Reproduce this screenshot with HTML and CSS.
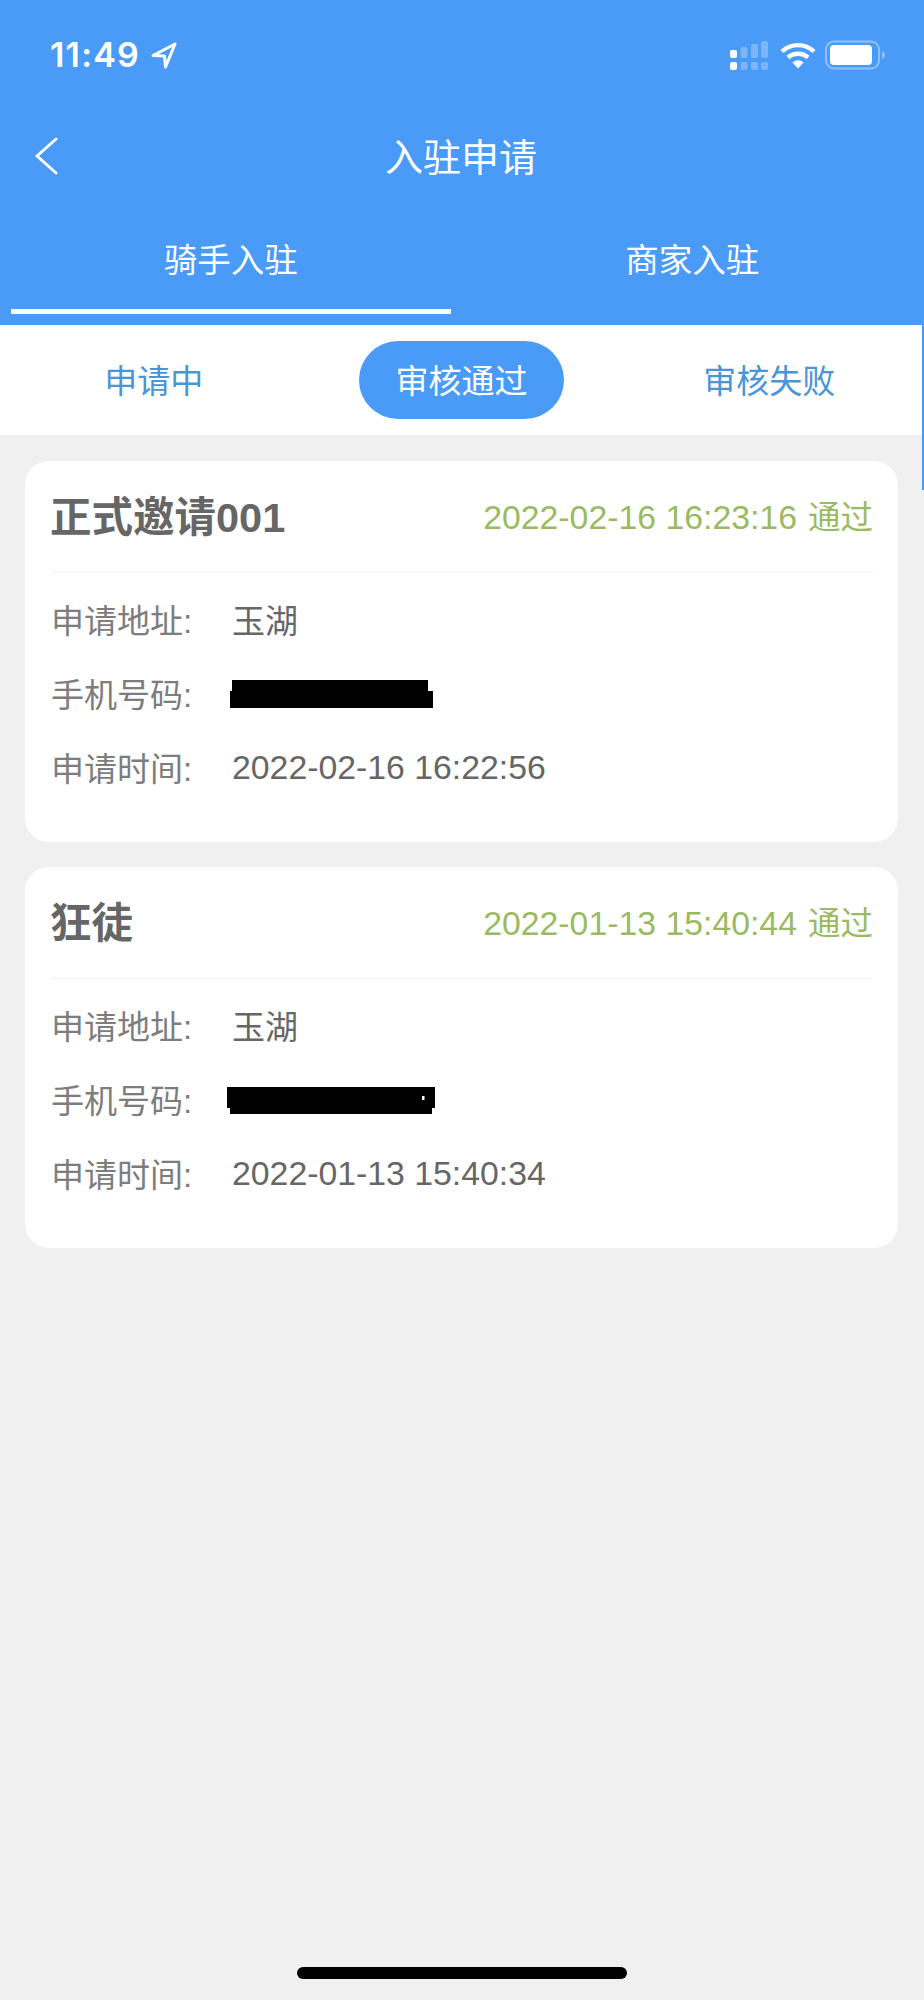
FILE: index.html
```html
<!DOCTYPE html>
<html lang="zh-CN">
<head>
  <meta charset="UTF-8">
  <meta name="viewport" content="width=device-width, initial-scale=1.0">
  <title>入驻申请</title>
  <link rel="stylesheet" href="styles.css">
</head>
<body>
  <div class="page">
    <!-- Blue header: status bar, title, top tabs -->
    <header class="header">
      <div class="status-bar">
        <div class="status-left">
          <span class="clock">11:49</span>
          <svg class="arrow-icon" width="28" height="28" viewBox="0 0 28 28">
            <path d="M25 3 L3 14.5 L14.5 15 L15.5 26 Z" fill="none" stroke="#fff" stroke-width="3" stroke-linejoin="round"/>
          </svg>
        </div>
        <div class="status-right">
          <svg width="38" height="29" viewBox="0 0 38 29">
            <g fill="#fff">
              <rect x="0" y="9" width="7" height="8" rx="2"/>
              <rect x="0" y="21" width="7" height="8" rx="2"/>
            </g>
            <g fill="#fff" opacity="0.28">
              <rect x="10.5" y="6" width="7" height="11" rx="2"/>
              <rect x="10.5" y="21" width="7" height="8" rx="2"/>
              <rect x="21" y="3" width="7" height="14" rx="2"/>
              <rect x="21" y="21" width="7" height="8" rx="2"/>
              <rect x="31" y="0" width="7" height="17" rx="2"/>
              <rect x="31" y="21" width="7" height="8" rx="2"/>
            </g>
          </svg>
          <svg class="wifi-icon" width="36" height="27" viewBox="0 0 36 27">
            <path d="M2 9.5 C11 1 25 1 34 9.5" fill="none" stroke="#fff" stroke-width="4.4"/>
            <path d="M8 15.5 C13.5 10.5 22.5 10.5 28 15.5" fill="none" stroke="#fff" stroke-width="4.4"/>
            <path d="M12.5 20.5 C16 17.5 20 17.5 23.5 20.5 L18 26.5 Z" fill="#fff"/>
          </svg>
          <svg class="battery-icon" width="60" height="30" viewBox="0 0 60 30">
            <rect x="1" y="1.500" width="53" height="27" rx="8" fill="none" stroke="#fff" stroke-opacity="0.4" stroke-width="2"/>
            <rect x="5" y="5" width="42" height="20" rx="4" fill="#fff"/>
            <path d="M57 11 C59 12 60 13.500 60 15 C60 16.500 59 18 57 19 Z" fill="#fff" fill-opacity="0.4"/>
          </svg>
        </div>
      </div>

      <nav class="title-bar">
        <svg class="back-icon" width="24" height="38" viewBox="0 0 24 38">
          <polyline points="22,2 3,19 22,36" fill="none" stroke="#fff" stroke-width="3" stroke-linecap="round" stroke-linejoin="round"/>
        </svg>
        <h1 class="page-title">入驻申请</h1>
      </nav>

      <div class="top-tabs">
        <div class="top-tab active">骑手入驻</div>
        <div class="top-tab">商家入驻</div>
      </div>
    </header>

    <!-- Review status filter -->
    <div class="sub-tabs">
      <div class="sub-tab">申请中</div>
      <div class="sub-tab active">审核通过</div>
      <div class="sub-tab">审核失败</div>
    </div>

    <!-- Application cards -->
    <main class="card-list">
      <section class="card">
        <div class="card-head">
          <h2 class="card-name">正式邀请001</h2>
          <div class="card-status"><span class="date-text">2022-02-16 16:23:16</span> 通过</div>
        </div>
        <div class="info-row">
          <span class="info-label">申请地址:</span>
          <span class="info-value">玉湖</span>
        </div>
        <div class="info-row">
          <span class="info-label">手机号码:</span>
          <svg class="redact redact-one" width="203" height="28" viewBox="0 0 203 28">
            <path d="M2 0 H198 V11 H203 V28 H0 V11 H2 Z" fill="#000"/>
          </svg>
        </div>
        <div class="info-row">
          <span class="info-label">申请时间:</span>
          <span class="info-value date-text">2022-02-16 16:22:56</span>
        </div>
      </section>

      <section class="card">
        <div class="card-head">
          <h2 class="card-name">狂徒</h2>
          <div class="card-status"><span class="date-text">2022-01-13 15:40:44</span> 通过</div>
        </div>
        <div class="info-row">
          <span class="info-label">申请地址:</span>
          <span class="info-value">玉湖</span>
        </div>
        <div class="info-row">
          <span class="info-label">手机号码:</span>
          <svg class="redact redact-two" width="208" height="27" viewBox="0 0 208 27">
            <path d="M0 0 H208 V21 H205 V27 H3 V21 H0 Z" fill="#000"/>
            <rect x="195" y="9" width="2.500" height="4" fill="#fff"/>
          </svg>
        </div>
        <div class="info-row">
          <span class="info-label">申请时间:</span>
          <span class="info-value date-text">2022-01-13 15:40:34</span>
        </div>
      </section>
    </main>

    <div class="home-bar"></div>
    <div class="scroll-line"></div>
  </div>
</body>
</html>
```

FILE: styles.css
```css
/* Page base */
* {
  box-sizing: border-box;
}

body {
  margin: 0;
  font-family: "Liberation Sans", "Noto Sans CJK SC", sans-serif;
  background-color: #f0f0f0;
}

.page {
  position: relative;
  display: flex;
  flex-direction: column;
  height: 2000px;
  overflow: hidden;
}

/* Blue header */
.header {
  height: 325px;
  background-color: #4a9af8;
  color: #fff;
}

.status-bar {
  display: flex;
  justify-content: space-between;
  align-items: center;
  height: 110px;
  padding: 0 39px 0 50px;
}

.status-left {
  display: flex;
  align-items: center;
  gap: 10px;
}

.clock {
  font-family: Inter, "Liberation Sans", sans-serif;
  font-size: 34px;
  font-weight: 600;
  letter-spacing: 1.2px;
  line-height: 38px;
}

.status-right {
  display: flex;
  align-items: center;
}

.wifi-icon {
  margin-left: 12px;
}

.battery-icon {
  margin-left: 9px;
}

.title-bar {
  display: grid;
  grid-template-columns: 1fr auto 1fr;
  align-items: center;
  height: 92px;
  padding: 0 36px 0 34px;
}

.page-title {
  grid-column: 2;
  margin: 4px 0 0;
  font-size: 38px;
  font-weight: 400;
  line-height: 50px;
}

.back-icon {
  grid-column: 1;
  grid-row: 1;
}

.top-tabs {
  display: flex;
  gap: 22px;
  height: 123px;
  padding: 0 12px 0 11px;
}

.top-tab {
  flex: 1;
  height: 112px;
  padding-top: 37px;
  font-size: 33.5px;
  line-height: 44px;
  text-align: center;
}

.top-tab.active {
  border-bottom: 5px solid #fff;
}

/* Status filter */
.sub-tabs {
  display: grid;
  grid-template-columns: repeat(3, 1fr);
  justify-items: center;
  height: 110px;
  padding: 16px 1px 16px 0;
  background-color: #fff;
}

.sub-tab {
  width: 205px;
  height: 78px;
  padding-top: 2px;
  border-radius: 39px;
  font-size: 33px;
  line-height: 78px;
  text-align: center;
  color: #4a94d8;
}

.sub-tab.active {
  background-color: #4a9af8;
  color: #fff;
}

/* Cards */
.card-list {
  flex: 1;
  display: flex;
  flex-direction: column;
  gap: 25px;
  padding: 26px 26px 0 25px;
}

.card {
  height: 381px;
  padding: 0 25px 0 27px;
  background-color: #fff;
  border-radius: 24px;
}

.card-head {
  display: flex;
  justify-content: space-between;
  align-items: center;
  height: 112px;
  margin-bottom: 9px;
  padding-bottom: 5px;
  border-bottom: 1px solid #f2f2f2;
}

.card-name {
  margin: 0 0 0 -2px;
  font-size: 41.5px;
  font-weight: 700;
  color: #666;
}

.card-status {
  font-size: 32.5px;
  color: #9aba62;
}

.card-status .date-text {
  margin-right: 2px;
}

.date-text {
  font-size: 33.8px;
}

.info-row {
  display: flex;
  align-items: center;
  height: 74px;
  font-size: 33px;
}

.info-label {
  width: 180px;
  flex-shrink: 0;
  margin-left: -1px;
  margin-right: 1px;
  color: #7d7d7d;
}

.info-value {
  color: #666;
}

.redact {
  margin-top: 2px;
}

.redact-one {
  margin-left: -2px;
}

.redact-two {
  margin-left: -5px;
}

/* iOS home indicator */
.home-bar {
  align-self: center;
  width: 330px;
  height: 12px;
  margin-bottom: 21px;
  border-radius: 6px;
  background-color: #000;
}

/* Thin blue line at the right edge */
.scroll-line {
  position: absolute;
  top: 325px;
  right: 0;
  width: 2px;
  height: 165px;
  background-color: #4a9af8;
}
```
